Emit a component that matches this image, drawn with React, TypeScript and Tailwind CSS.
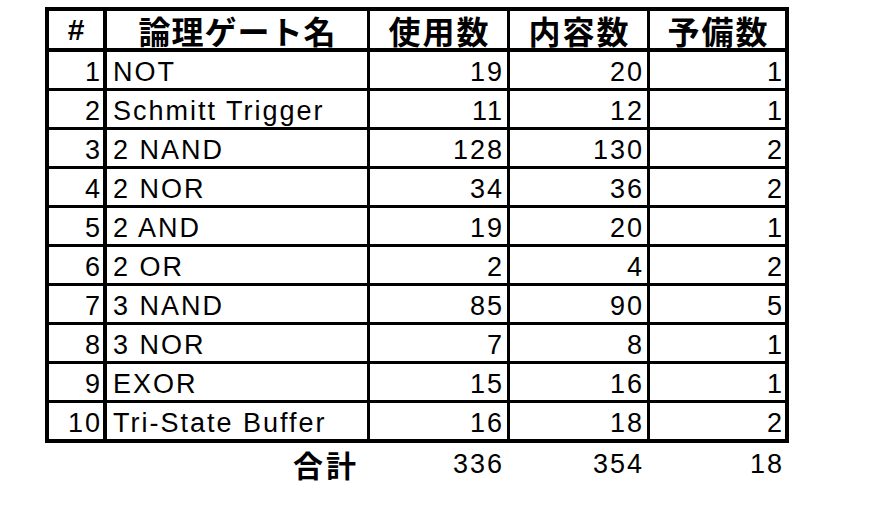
const rows: [number, string, number, number, number][] = [
  [1, 'NOT', 19, 20, 1],
  [2, 'Schmitt Trigger', 11, 12, 1],
  [3, '2 NAND', 128, 130, 2],
  [4, '2 NOR', 34, 36, 2],
  [5, '2 AND', 19, 20, 1],
  [6, '2 OR', 2, 4, 2],
  [7, '3 NAND', 85, 90, 5],
  [8, '3 NOR', 7, 8, 1],
  [9, 'EXOR', 15, 16, 1],
  [10, 'Tri-State Buffer', 16, 18, 2],
]

const font = "font-['Liberation_Sans','Noto_Sans_CJK_JP',sans-serif]"
const cjk = "font-['Noto_Sans_CJK_JP',sans-serif]"

export default function App() {
  return (
    <div className={`min-h-[529px] w-[869px] bg-white pl-[45px] pt-[7px] text-black ${font}`}>
      <div className="w-[744px] border-4 border-black">
        {/* header */}
        <div className={`flex h-[41px] border-b-4 border-black font-bold ${cjk}`}>
          <div className={`flex w-[58px] items-center justify-center border-r-4 border-black text-[30px] leading-none ${font}`}>#</div>
          <div className="flex w-[263px] items-center justify-center border-r-[3px] border-black pl-[1px] text-[32px] leading-none tracking-[1px]">論理ゲート名</div>
          <div className="flex w-[140px] items-center justify-center border-r-[3px] border-black pl-[2px] text-[32px] leading-none tracking-[2px]">使用数</div>
          <div className="flex w-[140px] items-center justify-center border-r-[3px] border-black pl-[2px] text-[32px] leading-none tracking-[2px]">内容数</div>
          <div className="flex w-[135px] items-center justify-center pl-[2px] text-[32px] leading-none tracking-[2px]">予備数</div>
        </div>
        {rows.map(([n, name, used, content, spare], i) => (
          <div
            key={n}
            className={`flex text-[27px] leading-none tracking-[2px] ${i < rows.length - 1 ? 'h-[39px] border-b-[3px] border-black' : 'h-[36px]'}`}
          >
            <div className="flex w-[58px] items-end justify-end border-r-4 border-black pb-[2px] pr-[1px]">{n}</div>
            <div className="flex w-[263px] items-end border-r-[3px] border-black pb-[2px] pl-[6px]">{name}</div>
            <div className="flex w-[140px] items-end justify-end border-r-[3px] border-black pb-[2px] pr-[3px]">{used}</div>
            <div className="flex w-[140px] items-end justify-end border-r-[3px] border-black pb-[2px] pr-[3px]">{content}</div>
            <div className="flex w-[135px] items-end justify-end pb-[2px] pr-[1px]">{spare}</div>
          </div>
        ))}
      </div>
      {/* totals */}
      <div className="flex h-[42px] w-[744px] pl-[4px] text-[27px] leading-none tracking-[2px]">
        <div className="w-[58px]" />
        <div className={`flex w-[263px] items-center justify-end pr-[11px] text-[30px] font-bold tracking-[3px] ${cjk}`}>合計</div>
        <div className="flex w-[140px] items-center justify-end pr-[6px]">336</div>
        <div className="flex w-[140px] items-center justify-end pr-[6px]">354</div>
        <div className="flex w-[135px] items-center justify-end pr-[1px]">18</div>
      </div>
    </div>
  )
}
